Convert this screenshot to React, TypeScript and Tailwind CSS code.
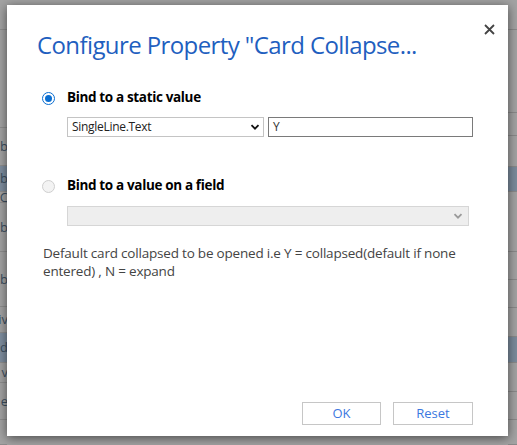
import React from "react";

const leftRows = [
  { h: 30, t: "" },
  { h: 98, t: "" },
  { h: 38, t: "b" },
  { h: 26, t: "b", blue: true },
  { h: 11, t: "C" },
  { h: 49, t: "b" },
  { h: 55, t: "b" },
  { h: 26, t: "iv" },
  { h: 30, t: "d", blue: true },
  { h: 20, t: "v" },
  { h: 37, t: "e" },
  { h: 25, t: "" },
];

const rightRows = [
  { h: 30 },
  { h: 83 },
  { h: 23 },
  { h: 31 },
  { h: 25, blue: true },
  { h: 60 },
  { h: 28 },
  { h: 28 },
  { h: 29 },
  { h: 26, blue: true },
  { h: 29 },
  { h: 28 },
  { h: 25 },
];

function Chevron({ color, size = 10 }: { color: string; size?: number }) {
  return (
    <svg width={size} height={size} viewBox="0 0 10 10" fill="none">
      <path d="M1.5 3.2 L5 6.7 L8.5 3.2" stroke={color} strokeWidth="1.8" />
    </svg>
  );
}

export default function App() {
  const font = { fontFamily: '"Open Sans", "Noto Sans", sans-serif' };
  return (
    <div className="relative w-[517px] h-[445px] overflow-hidden bg-[#a3a3a3]" style={font}>
      {/* background list behind overlay */}
      <div className="flex h-full justify-between">
        <div className="flex flex-col w-[7px] overflow-hidden">
          {leftRows.map((r, i) => (
            <div
              key={i}
              className={`flex items-center justify-end border-b border-[#8e8e8e] text-[13px] leading-none text-[#3d4f60] whitespace-nowrap ${r.blue ? "bg-[#7f8fa0]" : ""}`}
              style={{ height: r.h }}
            >
              <span className="mr-[-1px]">{r.t}</span>
            </div>
          ))}
        </div>
        <div className="flex flex-col w-[9px] overflow-hidden">
          {rightRows.map((r, i) => (
            <div
              key={i}
              className={`border-b border-[#8a8a8a] ${r.blue ? "bg-[#7b8b9c]" : ""}`}
              style={{ height: r.h }}
            />
          ))}
        </div>
      </div>

      {/* dialog */}
      <div className="absolute left-[7px] top-[5px] w-[501px] h-[431px] bg-white shadow-[0_2px_10px_rgba(0,0,0,0.55)] flex flex-col">
        <button className="absolute right-[13px] top-[18px] w-[12px] h-[12px] flex items-center justify-center">
          <svg width="11" height="11" viewBox="0 0 11 11">
            <path d="M1 1 L10 10 M10 1 L1 10" stroke="#444" strokeWidth="1.8" />
          </svg>
        </button>

        <div className="pl-[30px] pt-[24px] text-[24px] leading-[32px] text-[#1f5fbf] whitespace-nowrap tracking-[-0.6px]">
          Configure Property "Card Collapse...
        </div>

        <div className="pl-[35px] mt-[30px] flex items-center h-[14px]">
          <span className="w-[13px] h-[13px] rounded-full border-[1.5px] border-[#0a6ed1] flex items-center justify-center">
            <span className="w-[7px] h-[7px] rounded-full bg-[#0a6ed1]" />
          </span>
          <span className="ml-[12px] text-[13.5px] font-bold text-black leading-none tracking-[-0.35px]">
            Bind to a static value
          </span>
        </div>

        <div className="pl-[60px] mt-[12px] flex gap-[4px]">
          <div className="w-[197px] h-[20px] border border-[#c4c4c4] flex items-center justify-between pl-[4px] pr-[3px]">
            <span className="text-[12px] leading-none text-[#222] tracking-[-0.3px]">SingleLine.Text</span>
            <Chevron color="#111" />
          </div>
          <div className="w-[205px] h-[20px] border border-[#7a7a7a] flex items-center pl-[4px]">
            <span className="text-[12px] leading-none text-[#333]">Y</span>
          </div>
        </div>

        <div className="pl-[35px] mt-[42px] flex items-center h-[14px]">
          <span className="w-[13px] h-[13px] rounded-full border border-[#cfcfcf] bg-[#f3f3f3]" />
          <span className="ml-[12px] text-[13.5px] font-bold text-black leading-none tracking-[-0.35px]">
            Bind to a value on a field
          </span>
        </div>

        <div className="pl-[60px] mt-[13px]">
          <div className="w-[402px] h-[20px] border border-[#d6d6d6] bg-[#eeeeee] flex items-center justify-end pr-[5px]">
            <Chevron color="#9a9a9a" />
          </div>
        </div>

        <div className="pl-[36px] pr-[30px] mt-[18px] text-[13.5px] leading-[18px] text-[#444] tracking-[-0.2px]">
          Default card collapsed to be opened i.e Y = collapsed(default if none entered) , N = expand
        </div>

        <div className="mt-auto mb-[11px] flex justify-end gap-[12px] pr-[35px]">
          <button className="w-[79px] h-[23px] border border-[#c6c6c6] text-[13px] text-[#3b78e0]">OK</button>
          <button className="w-[80px] h-[23px] border border-[#c6c6c6] text-[13px] text-[#3b78e0]">Reset</button>
        </div>
      </div>
    </div>
  );
}
